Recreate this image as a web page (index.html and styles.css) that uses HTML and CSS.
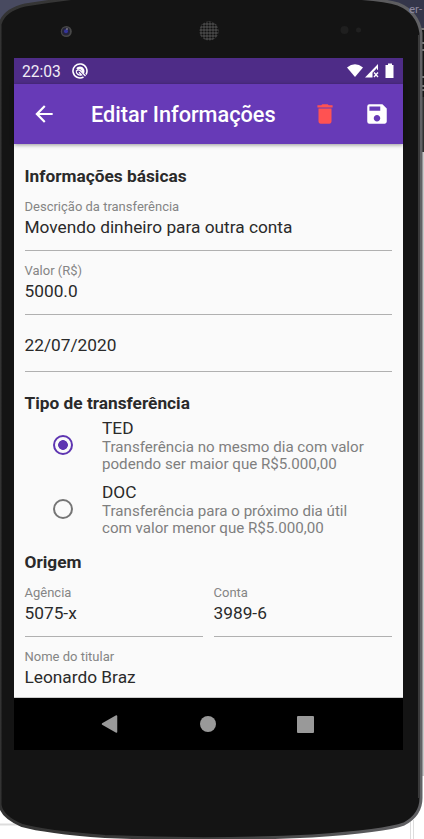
FILE: index.html
```html
<!DOCTYPE html>
<html lang="pt-BR">
<head>
<meta charset="utf-8">
<title>Editar Informações</title>
<link rel="stylesheet" href="styles.css">
</head>
<body>
<svg class="shell" width="424" height="839" viewBox="0 0 424 839" aria-hidden="true">
  <defs>
    <pattern id="mesh" width="3" height="3" patternUnits="userSpaceOnUse"><rect width="3" height="3" fill="#484848"/><circle cx="1.500" cy="1.500" r="1.100" fill="#101010"/></pattern>
    <linearGradient id="rim" x1="0" x2="1"><stop offset="0" stop-color="#333"/><stop offset=".5" stop-color="#3e3e3e"/><stop offset="1" stop-color="#626265"/></linearGradient>
  </defs>
  <rect width="424" height="839" fill="#fff"/>
  <rect width="60" height="40" fill="#484a60"/>
  <rect x="370" width="54" height="28" fill="#34364a"/>
  <rect x="415" y="28" width="9" height="124" fill="#151515"/>
  <path d="M420 29h4M422 43h2M422 50h2M421 77h3M422 86h2M422 90h2" stroke="#ddd"/>
  <rect x="420" y="97" width="4" height="55" fill="#303030"/>
  <rect x="421" y="152" width="3" height="624" fill="#c9c9c9"/>
  <path d="M0 824.500h30" stroke="#ddd" stroke-width="2"/>
  <path d="M410.500 820v19M413.500 820v19" stroke="#ddd"/>
  <path d="M0 24Q4 10 25 5Q50 1 75-2H355Q385 0 398 4Q418 12 421 33V798Q421 815 404 824Q385 831 312 836Q210 841 105 836.500Q45 832 22 825.500Q2 817 0 805Z" fill="#141414" stroke="url(#rim)" stroke-width="3"/>
  <path d="M418.700 35V798" stroke="#3b3b3b" stroke-width="1.500"/>
  <circle cx="66.300" cy="31.500" r="5.500" fill="#484848"/>
  <circle cx="66" cy="31.500" r="4" fill="#25243a"/>
  <circle cx="66" cy="31.300" r="2" fill="#35359a"/>
  <circle cx="67" cy="29" r=".8" fill="#aaa"/>
  <circle cx="209" cy="31" r="9.700" fill="url(#mesh)"/>
  <circle cx="344.500" cy="30" r="4" fill="#1f1f1f"/>
  <circle cx="358.500" cy="30" r="2.500" fill="#202020"/>
</svg>
<span class="backdrop-text">er-</span>
<main class="screen">
  <div class="status">
    <span class="clock">22:03</span>
    <svg width="16" height="16" viewBox="0 0 16 16"><path d="M14 11.500A7 7 0 1 0 11.500 14" fill="none" stroke="#fff" stroke-width="1.600"/><path d="M4.300 5.500C6 2.800 10.500 2.800 12 6c.8 1.600.6 3.600-.1 4.700L9.800 8.500C9.500 6.500 7.500 5.400 5.700 6.500Z" fill="#fff"/><path d="M4 8.200l2-1.500 2 .6L13.500 13M4.200 8.500C4.500 11 7 12.600 9.500 11.900L7 9.300" fill="none" stroke="#fff" stroke-width="1.300"/></svg>
    <svg class="signals" width="48" height="16" viewBox="0 0 48 16" fill="#fff"><path d="M0 4.500Q8-2 16 4.500L8 14Z"/><path d="M18 14.500L31 1v5.700h-1V5l-4.500 4.700v4.800Z"/><path d="M27 9.500l4 4.500M31 9.500L27 14" stroke="#fff" stroke-width="1.300"/><path d="M41 .5h4V2h1.500v13h-8V2H41Z"/></svg>
  </div>
  <header class="appbar">
    <svg class="back" width="26" height="26" viewBox="0 0 24 24" fill="#fff"><path d="M20 11H7.830l5.590-5.590L12 4l-8 8 8 8 1.410-1.410L7.830 13H20v-2z"/></svg>
    <h1>Editar Informações</h1>
    <svg class="delete" width="26" height="26" viewBox="0 0 24 24" fill="#ff5252"><path d="M6 19c0 1.100.9 2 2 2h8c1.100 0 2-.9 2-2V7H6v12zM19 4h-3.500l-1-1h-5l-1 1H5v2h14V4z"/></svg>
    <svg width="26" height="26" viewBox="0 0 24 24" fill="#fff"><path d="M17 3H5a2 2 0 0 0-2 2v14a2 2 0 0 0 2 2h14c1.100 0 2-.9 2-2V7l-4-4zm-5 16c-1.660 0-3-1.340-3-3s1.340-3 3-3 3 1.340 3 3-1.340 3-3 3zm3-10H5V5h10v4z"/></svg>
  </header>
  <div class="content">
    <h2>Informações básicas</h2>
    <div class="field"><label>Descrição da transferência</label><span class="value">Movendo dinheiro para outra conta</span></div>
    <div class="field"><label>Valor (R$)</label><span class="value">5000.0</span></div>
    <div class="field date"><span class="value">22/07/2020</span></div>
    <h2 class="type-title">Tipo de transferência</h2>
    <div class="option">
      <span class="radio checked"></span>
      <div><div class="name">TED</div><p>Transferência no mesmo dia com valor<br>podendo ser maior que R$5.000,00</p></div>
    </div>
    <div class="option">
      <span class="radio"></span>
      <div><div class="name">DOC</div><p>Transferência para o próximo dia útil<br>com valor menor que R$5.000,00</p></div>
    </div>
    <h2 class="origin-title">Origem</h2>
    <div class="pair">
      <div class="field"><label>Agência</label><span class="value">5075-x</span></div>
      <div class="field"><label>Conta</label><span class="value">3989-6</span></div>
    </div>
    <div class="field holder"><label>Nome do titular</label><span class="value">Leonardo Braz</span></div>
  </div>
  <nav class="navbar">
    <svg width="18" height="20" viewBox="0 0 18 20"><path d="M1.500 10L15.500 2V18Z" fill="#999" stroke="#999" stroke-width="1.500" stroke-linejoin="round"/></svg>
    <span class="home"></span>
    <span class="recent"></span>
  </nav>
</main>
</body>
</html>
```
FILE: styles.css
```css
* { box-sizing: border-box; }
body {
  margin: 0;
  height: 839px;
  padding: 58px 21px 0 14px;
  overflow: hidden;
  position: relative;
  font-family: Roboto, sans-serif;
  color: #2a2a2a;
}
.shell { position: absolute; inset: 0; z-index: -2; }
.backdrop-text {
  position: absolute;
  left: 409px;
  top: 2px;
  z-index: -1;
  font-size: 11.500px;
  line-height: 14px;
  color: #8f8aa0;
}
h1, h2, p { margin: 0; }
svg { display: block; flex: none; }
.screen { width: 389px; height: 692px; display: flex; flex-direction: column; background: #fafafa; }
.status {
  height: 26px;
  flex: none;
  display: flex;
  align-items: center;
  gap: 12px;
  padding: 0 8px;
  background: #4e2c87;
}
.clock { font-size: 15.600px; line-height: 20px; padding-top: 1px; color: #f1edf6; width: 38px; }
.signals { margin-left: auto; }
.appbar {
  height: 60px;
  flex: none;
  display: flex;
  align-items: center;
  padding: 0 13px 0 17px;
  background: #673ab7;
  color: #fff;
  box-shadow: 0 1px 4px rgba(0, 0, 0, .4);
}
.appbar h1 { font-size: 21.700px; font-weight: 500; line-height: 26px; margin: 2px 0 0 34px; white-space: nowrap; }
.delete { margin-left: auto; margin-right: 26px; }
.content { height: 554px; flex: none; overflow: hidden; padding: 22px 11px 0 10.500px; border-bottom: 1px solid #ccc; }
h2 { font-size: 17.300px; font-weight: 700; line-height: 20px; height: 21px; white-space: nowrap; }
.field { height: 64px; padding-top: 13px; border-bottom: 1px solid #b0b0b0; }
.field label { display: block; font-size: 13px; line-height: 14px; margin-bottom: 3px; color: #858585; }
.value { display: block; font-size: 17.300px; line-height: 20px; white-space: nowrap; }
.date { height: 57px; padding-top: 20px; }
.type-title { margin-top: 21px; }
.option { display: flex; height: 64px; padding-left: 28.500px; }
.radio {
  flex: none;
  width: 20px;
  height: 20px;
  margin: 21px 29px 0 0;
  border: 2px solid #757575;
  border-radius: 50%;
}
.checked { border-color: #5e35b1; background: radial-gradient(circle, #5e35b1 0 4.500px, transparent 5.200px); }
.name { font-size: 17.300px; line-height: 20px; padding-top: 4px; }
.option p { font-size: 15.130px; line-height: 17.400px; padding-top: 1px; color: #7f7f7f; white-space: nowrap; }
.origin-title { margin-top: 10px; }
.pair { display: grid; grid-template-columns: 1fr 1fr; gap: 10.500px; }
.holder { border-bottom: 0; }
.navbar {
  height: 52px;
  flex: none;
  display: flex;
  align-items: center;
  justify-content: space-between;
  padding: 0 89px 0 87px;
  background: #000;
}
.home { width: 16px; height: 16px; border-radius: 50%; background: #999; }
.recent { width: 17px; height: 17px; border-radius: 1px; background: #999; }
```
